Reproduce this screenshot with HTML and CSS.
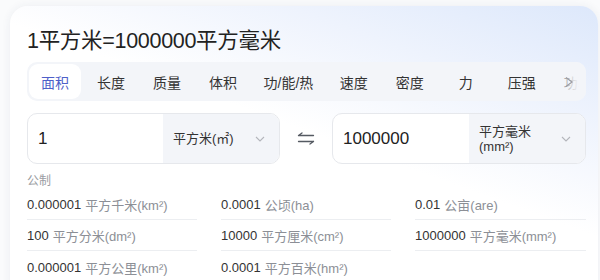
FILE: index.html
```html
<!DOCTYPE html>
<html lang="zh">
<head>
<meta charset="utf-8">
<link rel="stylesheet" href="styles.css">
</head>
<body>
<div class="card">
  <h1 class="title">1平方米=1000000平方毫米</h1>
  <div class="tabs">
    <div class="tab-track">
      <span class="tab active">面积</span>
      <span class="tab">长度</span>
      <span class="tab">质量</span>
      <span class="tab">体积</span>
      <span class="tab narrow">功/能/热</span>
      <span class="tab">速度</span>
      <span class="tab">密度</span>
      <span class="tab">力</span>
      <span class="tab">压强</span>
      <span class="tab">功率</span>
    </div>
    <div class="tab-more">
      <svg width="10" height="12" viewBox="0 0 10 12"><path d="M2 1.5 L8 6 L2 10.5" fill="none" stroke="#9a9ca3" stroke-width="1.2"/></svg>
    </div>
  </div>
  <div class="converter">
    <div class="field">
      <div class="value">1</div>
      <div class="unit">
        <span class="unit-text">平方米(㎡)</span>
        <svg class="chev" width="10" height="6" viewBox="0 0 10 6"><path d="M1 1 L5 5 L9 1" fill="none" stroke="#b4b6bc" stroke-width="1.1"/></svg>
      </div>
    </div>
    <div class="swap">
      <svg width="18" height="13" viewBox="0 0 18 13"><path d="M1.5 3.5 H16.5 M1.5 3.5 L5 1 M1.5 9.5 H16.5 M16.5 9.5 L13 12" fill="none" stroke="#555a62" stroke-width="1.3" stroke-linecap="round"/></svg>
    </div>
    <div class="field">
      <div class="value">1000000</div>
      <div class="unit">
        <span class="unit-text two">平方毫米<br>(mm²)</span>
        <svg class="chev" width="10" height="6" viewBox="0 0 10 6"><path d="M1 1 L5 5 L9 1" fill="none" stroke="#b4b6bc" stroke-width="1.1"/></svg>
      </div>
    </div>
  </div>
  <div class="section">公制</div>
  <div class="grid">
    <div class="row"><span class="num">0.000001</span> <span class="u">平方千米(km²)</span></div>
    <div class="row"><span class="num">0.0001</span> <span class="u">公顷(ha)</span></div>
    <div class="row"><span class="num">0.01</span> <span class="u">公亩(are)</span></div>
    <div class="row"><span class="num">100</span> <span class="u">平方分米(dm²)</span></div>
    <div class="row"><span class="num">10000</span> <span class="u">平方厘米(cm²)</span></div>
    <div class="row"><span class="num">1000000</span> <span class="u">平方毫米(mm²)</span></div>
    <div class="row last"><span class="num">0.000001</span> <span class="u">平方公里(km²)</span></div>
    <div class="row last"><span class="num">0.0001</span> <span class="u">平方百米(hm²)</span></div>
  </div>
</div>
</body>
</html>
```

FILE: styles.css
```css
* { box-sizing: border-box; }
html, body { margin: 0; padding: 0; }
body {
  background: #fafbfc;
  font-family: "Liberation Sans", "Noto Sans CJK SC", sans-serif;
  color: #222;
  width: 600px;
  height: 280px;
  overflow: hidden;
}
.card {
  margin: 6px 2px 0 10px;
  height: 300px;
  border-radius: 18px 18px 0 0;
  background: linear-gradient(200deg, #dde8fb 0%, #eef3fd 22%, #ffffff 45%);
  box-shadow: 0 0 10px rgba(40, 60, 100, 0.07);
  padding: 20px 12px 0 17px;
}
.title {
  margin: 0;
  font-size: 21.5px;
  line-height: 30px;
  font-weight: 400;
  color: #222;
  letter-spacing: -0.3px;
}
.tabs {
  position: relative;
  margin-top: 6px;
  height: 39px;
  background: #f3f5f9;
  border-radius: 10px;
  padding: 2px;
  overflow: hidden;
}
.tab-track {
  display: flex;
  gap: 4px;
  white-space: nowrap;
}
.tab {
  flex: none;
  min-width: 52px;
  height: 35px;
  padding: 0 12px;
  display: flex;
  align-items: center;
  justify-content: center;
  font-size: 14px;
  color: #333;
  border-radius: 9px;
}
.tab.narrow { padding: 0 10.5px; }
.tab.active {
  background: #fff;
  color: #4e5fc9;
}
.tab-more {
  position: absolute;
  top: 0;
  right: 0;
  width: 28px;
  height: 39px;
  display: flex;
  align-items: center;
  justify-content: flex-start;
  padding-left: 6px;
  background: linear-gradient(90deg, rgba(243,245,249,0.35) 0%, rgba(243,245,249,0.8) 45%, #f3f5f9 75%);
}
.converter {
  margin-top: 12px;
  display: grid;
  grid-template-columns: 253px 52px 254px;
  height: 51px;
}
.field {
  display: flex;
  border: 1px solid #e6e8ec;
  border-radius: 10px;
  overflow: hidden;
  background: #fff;
}
.value {
  flex: 1;
  display: flex;
  align-items: center;
  padding-left: 10px;
  font-size: 17px;
  color: #222;
}
.unit {
  width: 116px;
  flex: none;
  background: #f3f5f9;
  display: flex;
  align-items: center;
  justify-content: space-between;
  padding: 0 14px 0 10px;
}
.unit-text {
  font-size: 13px;
  color: #333;
  line-height: 15px;
}
.chev { flex: none; }
.swap {
  display: flex;
  align-items: center;
  justify-content: center;
}
.section {
  margin-top: 9px;
  font-size: 12px;
  line-height: 16px;
  color: #9a9ca2;
}
.grid {
  display: grid;
  grid-template-columns: 170px 170px 171px;
  column-gap: 24px;
  width: 559px;
}
.row {
  height: 31px;
  display: flex;
  align-items: center;
  gap: 4px;
  font-size: 13px;
  border-bottom: 1px solid #eceef1;
  white-space: nowrap;
}
.row.last { border-bottom: none; height: 32px; }
.num { color: #333; }
.u { color: #8c8f96; }
```
